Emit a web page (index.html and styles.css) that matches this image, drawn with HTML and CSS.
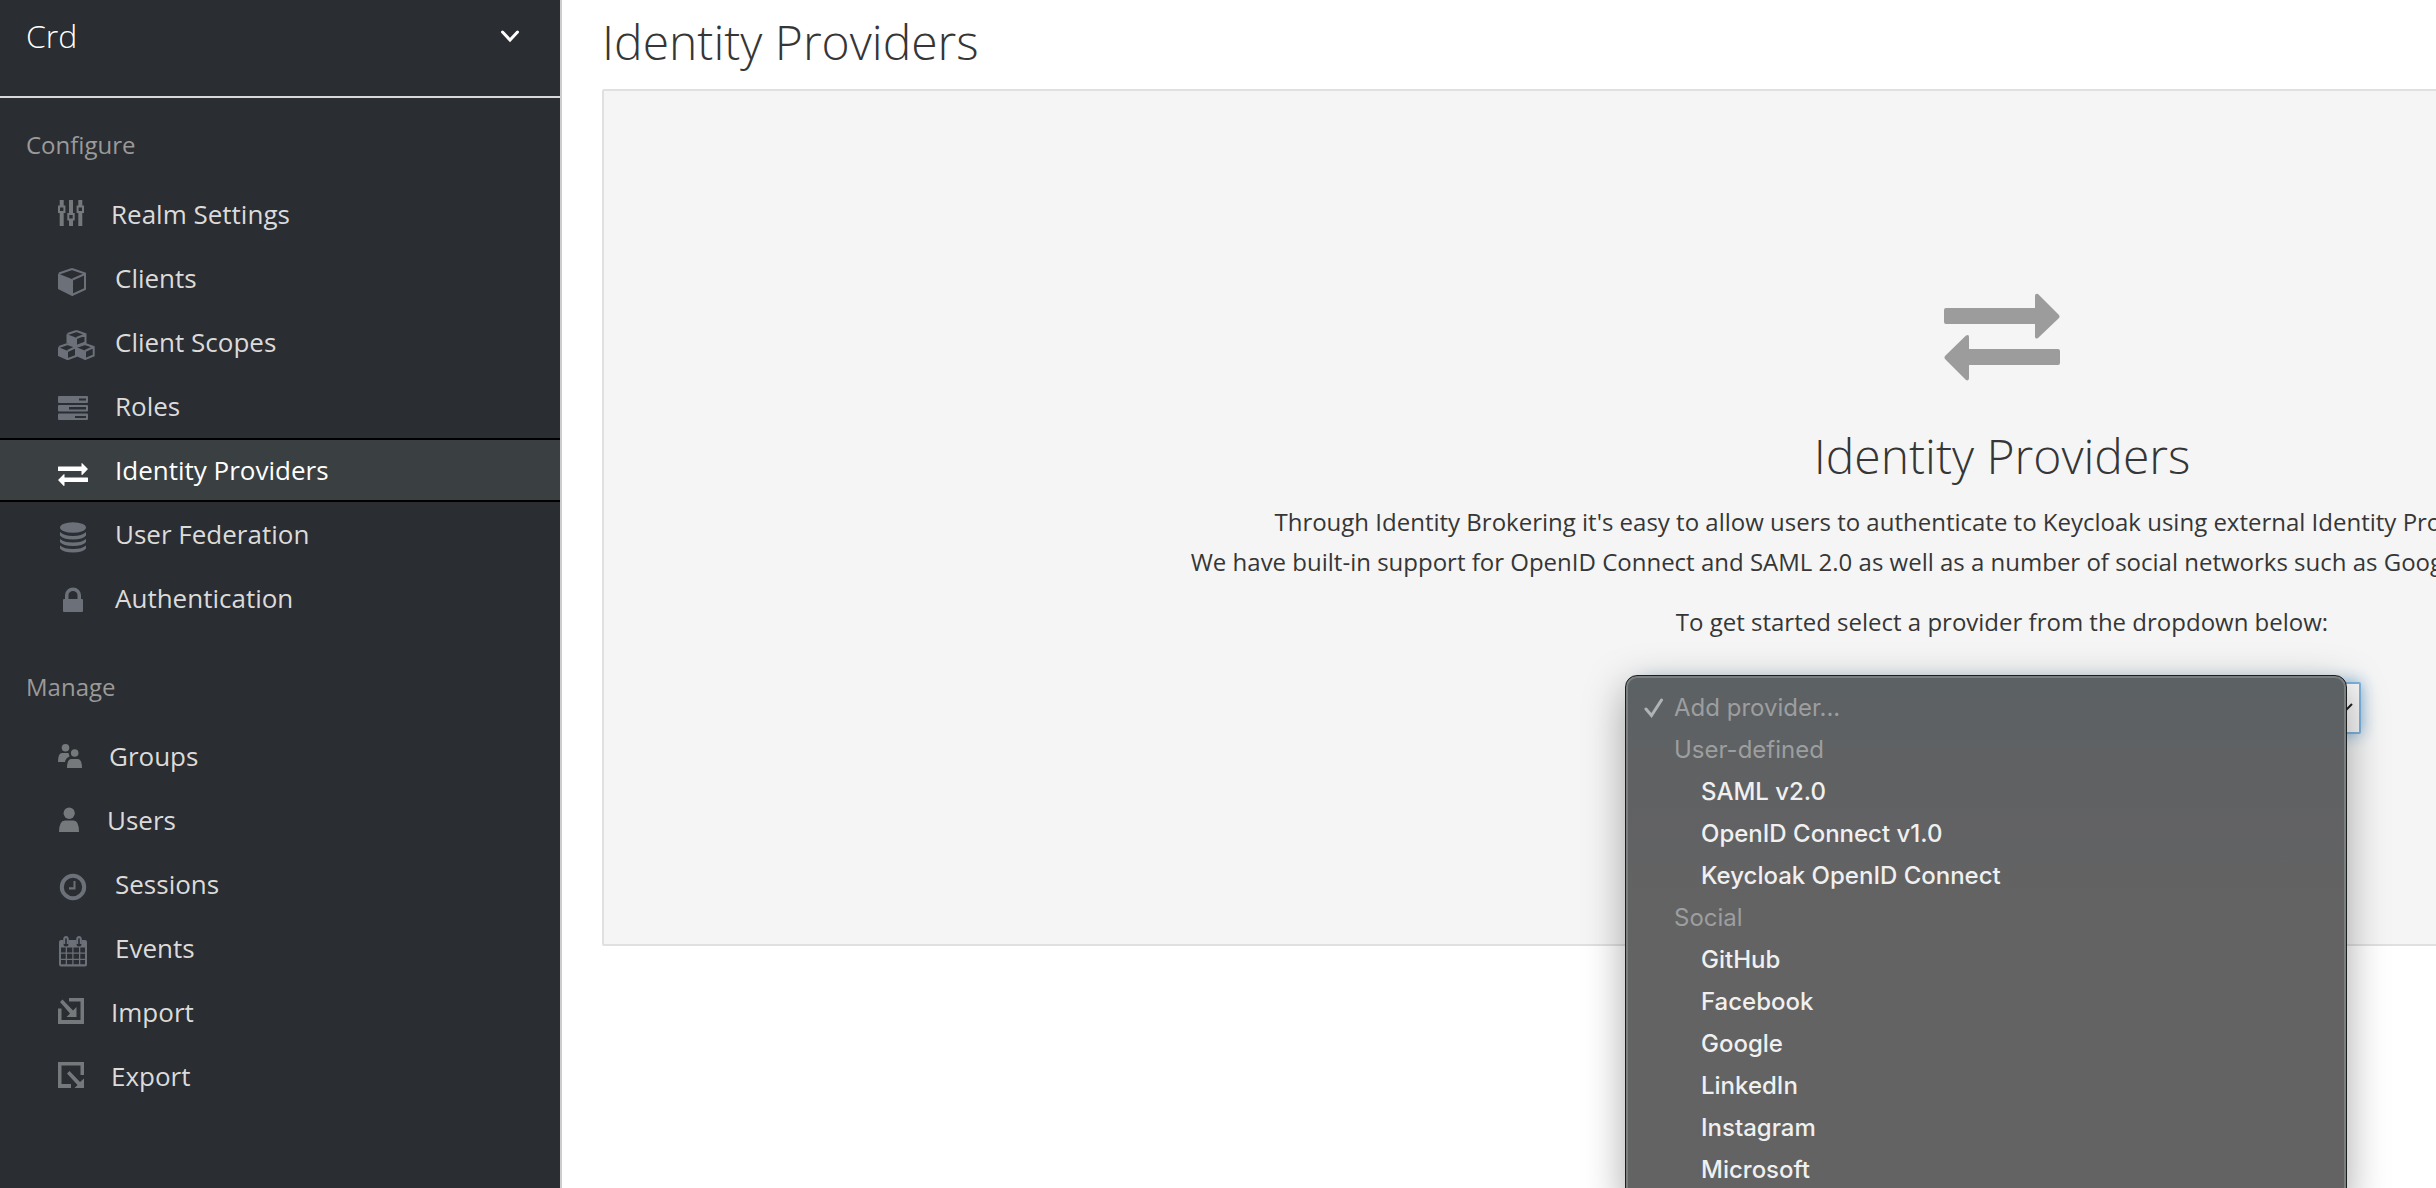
FILE: index.html
```html
<!DOCTYPE html>
<html lang="en">
<head>
<meta charset="utf-8">
<title>Identity Providers</title>
<link rel="stylesheet" href="styles.css">
</head>
<body>
<div class="app">
  <aside class="sidebar">
    <button class="realm" type="button" aria-haspopup="true">
      <span>Crd</span>
      <svg class="realm-arrow" viewBox="0 0 20 14" aria-hidden="true"><path d="M2.5 3 10 11 17.5 3"/></svg>
    </button>
    <nav class="nav">
      <h2 class="nav-title">Configure</h2>
      <ul class="nav-list">
        <li><a class="nav-link" href="#realm"><span class="icon icon-pf"><svg viewBox="0 0 40 40" aria-hidden="true"><path d="M1.7 6h4v6h-4zM1.7 18h4v14h-4zM11 6h4v13.500h-4zM11 26h4v6h-4zM20.300 6h4v6h-4zM20.300 18h4v14h-4z"/><path class="line" d="M1 12.500h5.400v5.500H1zM10.300 20h5.400v5.500h-5.400zM19.600 12.500H25V18h-5.400z"/></svg></span>Realm Settings</a></li>
        <li><a class="nav-link" href="#clients"><span class="icon"><svg viewBox="0 0 40 40" aria-hidden="true"><path d="M0 15.500 15 21.500V38h-1L0 31z"/><path class="line" d="M14 11 27 15.500V31L14 37M1 15.500 14 11M14.500 21.500 27 16"/></svg></span>Clients</a></li>
        <li><a class="nav-link" href="#scopes"><span class="icon"><svg viewBox="0 0 40 40" aria-hidden="true"><path d="M8.500 12 19 16v8l-1 1-9.500-4zM0 25l10 4v9H9l-9-4zM18 25l10 4v9h-1l-9-4z"/><path class="line" d="M18.500 9 9.500 12M18.500 9l9 3.200v8.300l-9 3.500M18.500 16l9-3.500M9.500 22 1 25M9.500 22l8.500 3v9l-8.500 3.200M9.500 29l8.500-4M27 22l-9 3M27 22l8.700 3v8.500L27 37.200M27 29l8.700-4"/></svg></span>Client Scopes</a></li>
        <li><a class="nav-link" href="#roles"><span class="icon"><svg viewBox="0 0 40 40" aria-hidden="true"><path fill-rule="evenodd" d="M1 10h28a1 1 0 0 1 1 1v5a1 1 0 0 1-1 1H1a1 1 0 0 1-1-1v-5a1 1 0 0 1 1-1zm20 2.500v2h7v-2zM1 19h28a1 1 0 0 1 1 1v4.500a1 1 0 0 1-1 1H1a1 1 0 0 1-1-1V20a1 1 0 0 1 1-1zm10 2v2.500h17V21zM1 27.500h28a1 1 0 0 1 1 1V33a1 1 0 0 1-1 1H1a1 1 0 0 1-1-1v-4.500a1 1 0 0 1 1-1zM17 30v2h11v-2z"/></svg></span>Roles</a></li>
        <li><a class="nav-link active" href="#idp" aria-current="page"><span class="icon"><svg viewBox="0 0 40 40" aria-hidden="true"><path d="M.500 16.500h23V14q0-1.500 1-.500l5.500 5.500-5.500 5.800q-1 .8-1-.6V21H.500Q0 21 0 20.500V17q0-.5.500-.500zM29.500 27.500H6.500V25q0-1.500-1-.6L0 30l5.500 5.700q1 .8 1-.6V32h23q.5 0 .5-.5V28q0-.5-.5-.5z"/></svg></span>Identity Providers</a></li>
        <li><a class="nav-link" href="#federation"><span class="icon"><svg viewBox="0 0 40 40" aria-hidden="true"><ellipse cx="15" cy="13.500" rx="13" ry="5.300"/><path d="M2 18q4 4 13 4t13-4v3.500q-3 4-13 4t-13-4zM2 25q4 3.500 13 3.500T28 25v3q-3 4-13 4T2 28zM2 31.500Q6 35 15 35t13-3.500v3q-3 4-13 4t-13-4z"/></svg></span>User Federation</a></li>
        <li><a class="nav-link" href="#auth"><span class="icon"><svg viewBox="0 0 40 40" aria-hidden="true"><path fill-rule="evenodd" d="M7 21v-4a8 7.500 0 0 1 16 0v4h1q1 0 1 1v11q0 1-1 1H6q-1 0-1-1V22q0-1 1-1zm3.500 0h9v-4a4.500 4 0 0 0-9 0z"/></svg></span>Authentication</a></li>
      </ul>
      <h2 class="nav-title">Manage</h2>
      <ul class="nav-list">
        <li><a class="nav-link" href="#groups"><span class="icon icon-pf icon-groups"><svg viewBox="0 0 40 40" aria-hidden="true"><circle cx="7.500" cy="11.700" r="3.800"/><circle cx="16.700" cy="17" r="3.800"/><path d="M0 26q0-9 4-9h6.500l1 3.500Q7.500 22 7 26zM9 32q0-9 4.500-9h6Q24 23 24 32z"/></svg></span>Groups</a></li>
        <li><a class="nav-link" href="#users"><span class="icon icon-pf icon-user"><svg viewBox="0 0 40 40" aria-hidden="true"><ellipse cx="11.200" cy="13.200" rx="5.600" ry="5.800"/><path d="M1 32Q1 20.500 7 20.500h8.500q5.500 0 5.500 11.500z"/></svg></span>Users</a></li>
        <li><a class="nav-link" href="#sessions"><span class="icon"><svg viewBox="0 0 40 40" aria-hidden="true"><circle class="ring" cx="15" cy="23" r="11.200"/><path d="M15.500 17h2v8.500H11v-2.300h4.500z"/></svg></span>Sessions</a></li>
        <li><a class="nav-link" href="#events"><span class="icon"><svg viewBox="0 0 40 40" aria-hidden="true"><path fill-rule="evenodd" d="M3 12h2.500v4q0 2.500 2.500 2.500t2.500-2.500v-4h8v4q0 2.500 2.500 2.500t2.500-2.500v-4H27q2 0 2 2v22.500q0 2-2 2H3q-2 0-2-2V14q0-2 2-2zM3 19.500v5h4.700v-5zm6 0v5h5.300v-5zm6.500 0v5H21v-5zm6.800 0v5H27v-5zM3 25.800v5h4.700v-5zm6 0v5h5.300v-5zm6.500 0v5H21v-5zm6.800 0v5H27v-5zM3 32v4.300h4.700V32zm6 0v4.300h5.300V32zm6.500 0v4.300H21V32zm6.800 0v4.300H27V32z"/><path class="line" d="M6.200 16v-4.500q0-2.500 1.800-2.500t1.800 2.500V16M19.200 16v-4.500q0-2.500 1.800-2.500t1.800 2.500V16"/></svg></span>Events</a></li>
        <li><a class="nav-link" href="#import"><span class="icon icon-pf"><svg viewBox="0 0 40 40" aria-hidden="true"><path d="M11 6h15v26H0V16.500h3.500V28h19V9.500H11zM2 10l2.500-2.500 10.500 11 3.500-3.500v10H8.500l3.500-3.500z"/></svg></span>Import</a></li>
        <li><a class="nav-link" href="#export"><span class="icon icon-pf"><svg viewBox="0 0 40 40" aria-hidden="true"><path d="M0 6h26v13h-3.500V9.500h-19V28H13v4H0zM9 17.500 11.500 15 22 26l4-3.500V32h-9.500l3-3z"/></svg></span>Export</a></li>
      </ul>
    </nav>
  </aside>

  <main class="content">
    <h1 class="heading">Identity Providers</h1>
    <section class="blank-slate">
      <svg class="slate-icon" viewBox="0 0 116 88" aria-hidden="true"><path d="M2 15h89V3q0-3 3-2l21 21q1 1.500 0 3L94 45q-3 1.500-3-1.500V31H2q-2 0-2-2V17q0-2 2-2zM114 56H25V44q0-3-3-1.500L1 63q-1 1.500 0 3l21 21q3 1.500 3-2V72h89q2 0 2-2V58q0-2-2-2z"/></svg>
      <h2 class="heading">Identity Providers</h2>
      <p>Through Identity Brokering it's easy to allow users to authenticate to Keycloak using external Identity Providers or Social Networks.<br>We have built-in support for OpenID Connect and SAML 2.0 as well as a number of social networks such as Google, GitHub, Facebook and Twitter.</p>
      <p><label for="provider">To get started select a provider from the dropdown below:</label></p>
      <div class="picker">
        <select id="provider" class="picker-select">
          <option>Add provider...</option>
        </select>
        <svg class="picker-arrow" viewBox="0 0 20 12" aria-hidden="true"><path d="M1 1 10 10 19 1"/></svg>
        <ul class="menu" role="listbox" aria-label="Add provider">
          <li class="menu-muted" role="option" aria-selected="true"><svg class="check" viewBox="0 0 20 20" aria-hidden="true"><path d="M2 11 7.500 17.500 17.500 2"/></svg>Add provider...</li>
          <li class="menu-muted">User-defined</li>
          <li class="menu-item" role="option">SAML v2.0</li>
          <li class="menu-item" role="option">OpenID Connect v1.0</li>
          <li class="menu-item" role="option">Keycloak OpenID Connect</li>
          <li class="menu-muted">Social</li>
          <li class="menu-item" role="option">GitHub</li>
          <li class="menu-item" role="option">Facebook</li>
          <li class="menu-item" role="option">Google</li>
          <li class="menu-item" role="option">LinkedIn</li>
          <li class="menu-item" role="option">Instagram</li>
          <li class="menu-item" role="option">Microsoft</li>
        </ul>
      </div>
    </section>
  </main>
</div>
</body>
</html>
```
FILE: styles.css
```css
* {
  box-sizing: border-box;
}

body {
  margin: 0;
  background: #fff;
  color: #363636;
  font-family: "Open Sans", "Noto Sans", sans-serif;
  font-size: 24px;
  line-height: 40px;
}

h1, h2, p, ul {
  margin: 0;
  padding: 0;
}

ul {
  list-style: none;
}

.app {
  display: flex;
  height: 100vh;
  overflow: hidden;
}

/* Sidebar */
.sidebar {
  flex: none;
  width: 562px;
  border-right: 2px solid #ccc;
  background: #2a2d31;
}

.realm {
  display: flex;
  justify-content: space-between;
  align-items: center;
  width: 100%;
  height: 98px;
  padding: 0 40px 24px 26px;
  border: 0;
  border-bottom: 2px solid #d8d8d8;
  background: none;
  color: #fff;
  font: 300 32px/40px "Open Sans", sans-serif;
  text-align: left;
}

.realm-arrow {
  width: 20px;
  height: 14px;
  fill: none;
  stroke: #fff;
  stroke-width: 3;
  stroke-linecap: round;
}

.nav-title {
  height: 84px;
  padding: 27px 26px 0;
  color: #9a9a9a;
  font-size: 24px;
  font-weight: 400;
}

.nav-list + .nav-title {
  height: 94px;
  padding-top: 37px;
}

.nav-link {
  display: flex;
  align-items: center;
  gap: 26px;
  height: 64px;
  padding-left: 58px;
  border: solid transparent;
  border-width: 2px 0;
  color: #dbdbdb;
  font-size: 26px;
  text-decoration: none;
}

.nav-link.active {
  border-color: #000;
  background: #3a3f42;
  color: #fff;
}

.icon {
  flex: none;
  width: 31px;
  height: 40px;
  color: #6c7079;
}

.icon-pf {
  width: 27px;
  color: #75797c;
}

.icon-groups {
  width: 25px;
}

.icon-user {
  width: 23px;
}

.active .icon {
  color: #fff;
}

.icon svg {
  display: block;
  width: 40px;
  height: 40px;
  fill: currentColor;
}

.icon .line,
.icon .ring {
  fill: none;
  stroke: currentColor;
  stroke-width: 2;
}

.icon .ring {
  stroke-width: 4;
}

/* Content */
.content {
  flex: 1;
  min-width: 0;
  padding: 9px 40px;
}

.heading {
  font-size: 48px;
  font-weight: 300;
  line-height: 66px;
}

.blank-slate {
  display: flex;
  flex-direction: column;
  align-items: center;
  gap: 20px;
  min-width: 2800px;
  margin-top: 14px;
  padding: 202px 80px 210px;
  border: 2px solid #e0e0e0;
  border-radius: 2px;
  background: #f5f5f5;
  text-align: center;
}

.slate-icon {
  width: 116px;
  height: 88px;
  margin-bottom: 22px;
  fill: #9c9c9c;
}

.blank-slate .heading {
  margin-bottom: -7px;
}

.picker {
  position: relative;
  width: 718px;
  margin-top: 20px;
}

.picker-select {
  display: block;
  width: 100%;
  height: 52px;
  padding: 0 40px 0 16px;
  appearance: none;
  border: 2px solid #7eb3dc;
  border-radius: 2px;
  background: #f8f8f8;
  box-shadow: 0 0 16px #7eb3dc;
  color: #363636;
  font: 24px "Open Sans", sans-serif;
}

.picker-arrow {
  position: absolute;
  top: 21px;
  right: 8px;
  width: 20px;
  height: 12px;
  fill: none;
  stroke: #222;
  stroke-width: 2;
}

.menu {
  position: absolute;
  top: -7px;
  left: -18px;
  width: 722px;
  padding: 11px 0;
  border: 1px solid #1c1f20;
  border-radius: 12px;
  background: linear-gradient(#5c6164, #606163 100px, #636363 240px);
  box-shadow: inset 0 0 0 2px #7b7f80, 0 12px 40px rgba(0, 0, 0, 0.35);
  color: #f0f0f0;
  font: 500 24px/42px Inter, sans-serif;
  text-align: left;
}

.menu-muted {
  display: flex;
  align-items: center;
  padding-left: 48px;
  color: #9c9e9f;
  font-weight: 400;
}

.menu-item {
  padding-left: 75px;
}

.check {
  width: 20px;
  height: 20px;
  margin-left: -30px;
  margin-right: 10px;
  fill: none;
  stroke: #b0b3b4;
  stroke-width: 3;
  stroke-linecap: round;
}
```
